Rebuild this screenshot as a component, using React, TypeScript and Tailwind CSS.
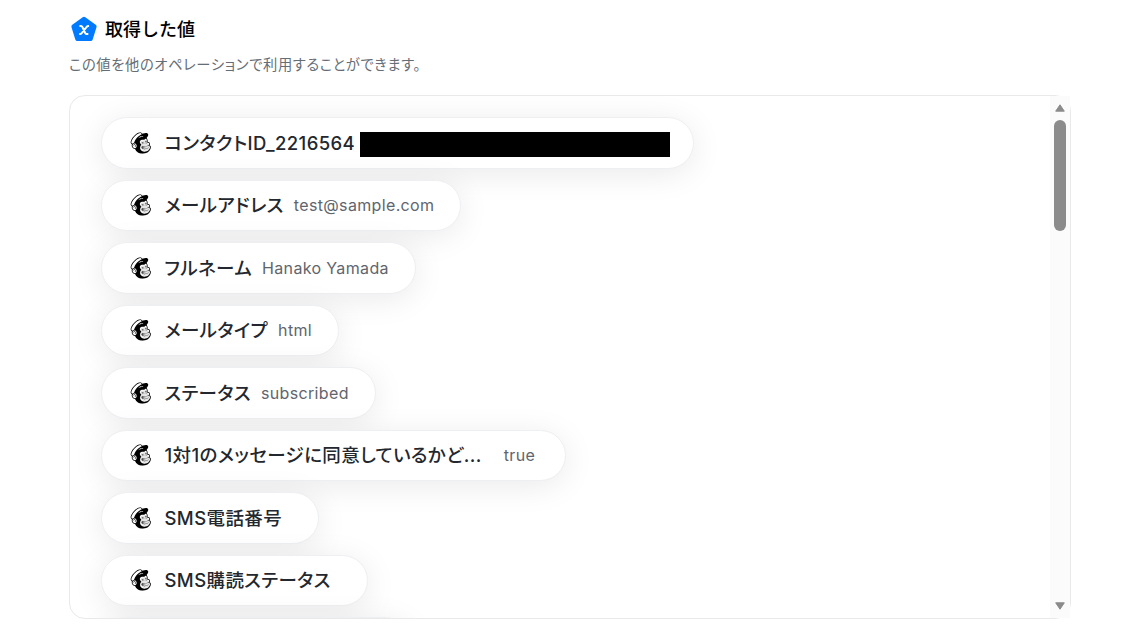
import { SiMailchimp } from "react-icons/si";

type Field = { label: string; value?: string; width: string; gap?: string; redacted?: boolean };

const fields: Field[] = [
  { label: "コンタクトID_2216564", width: "w-[593px]", redacted: true },
  { label: "メールアドレス", value: "test@sample.com", width: "w-[360px]", gap: "ml-[10px]" },
  { label: "フルネーム", value: "Hanako Yamada", width: "w-[315px]", gap: "ml-[10px]" },
  { label: "メールタイプ", value: "html", width: "w-[238.5px]", gap: "ml-[10px]" },
  { label: "ステータス", value: "subscribed", width: "w-[275px]", gap: "ml-[10px]" },
  { label: "1対1のメッセージに同意しているかど...", value: "true", width: "w-[465px]", gap: "ml-[22px]" },
  { label: "SMS電話番号", width: "w-[218.5px]" },
  { label: "SMS購読ステータス", width: "w-[267px]" },
];

const pill =
  "flex h-[51.5px] shrink-0 items-center rounded-full border border-[#eeeff2] bg-white shadow-[0_5px_32px_rgba(0,0,0,0.085)]";

function MailchimpIcon() {
  return (
    <svg className="h-[22px] w-[21.5px] shrink-0" viewBox="0 0 24 24">
      <path d="M12 9.5L19.5 9L20 13L23 15.5L20.5 20L15 21L11.5 17Z" fill="#e2e2e2" />
      <SiMailchimp size={24} color="#000" />
      <path d="M3.3 9.5C4.5 6.3 7.3 3.8 10.3 2.5" fill="none" stroke="#fff" strokeOpacity=".5" strokeWidth="1.2" />
      <path d="M14 12.5L18 12L19 15L21.5 15.5L20 18L15.5 18.5Z" fill="#e8e8e8" fillOpacity=".55" />
    </svg>
  );
}

function FieldPill({ field }: { field: Field }) {
  return (
    <div className={`${pill} ${field.width} pl-[28px]`}>
      <MailchimpIcon />
      <span className="ml-[13.5px] mt-[1.5px] whitespace-nowrap text-[18.5px] font-medium tracking-[0.4px] text-[#23272e] [font-feature-settings:'palt']">
        {field.label}
      </span>
      {field.value && (
        <span className={`${field.gap} whitespace-nowrap text-[16px] tracking-[0.35px] text-[#5f656e]`}>
          {field.value}
        </span>
      )}
      {field.redacted && <div className="ml-[5px] mt-[3px] h-[25.5px] w-[310px] shrink-0 bg-black" />}
    </div>
  );
}

function VariableIcon() {
  return (
    <svg className="h-[26px] w-[28px]" viewBox="0 0 28 26">
      <path
        d="M12.7 1.3Q14 .4 15.3 1.3L25.7 8.8Q27 9.7 26.5 11.2L22.7 23.4Q22.2 25 20.6 25H7.4Q5.8 25 5.3 23.4L1.5 11.2Q1 9.7 2.3 8.8Z"
        fill="#007bff"
      />
      <path
        d="M10.2 10H11q.9 0 1.400 1l2.800 6q.5 1 1.400 1h1M18.300 10q-.9 0-1.600.9l-5 6.200q-.7.9-1.700.9"
        fill="none"
        stroke="#fff"
        strokeWidth="1.9"
        strokeLinecap="round"
        strokeLinejoin="round"
      />
    </svg>
  );
}

export default function App() {
  return (
    <div className="h-[627px] overflow-hidden bg-white pl-[69px] font-['Inter','Noto_Sans_CJK_JP',sans-serif]">
      <header className="flex h-[95px] flex-col pt-[16px]">
        <div className="flex h-[26px] items-center pl-[1px]">
          <VariableIcon />
          <h1 className="ml-[7px] mt-[2px] text-[18px] font-medium leading-[26px] text-black">取得した値</h1>
        </div>
        <p className="mt-[12px] text-[14.3px] leading-[22px] tracking-[0.6px] text-[#656d76] [font-feature-settings:'palt']">
          この値を他のオペレーションで利用することができます。
        </p>
      </header>
      <section className="flex h-[524px] w-[1002px] rounded-[16px] border border-[#e9e9e9]">
        <div className="flex h-full flex-1 flex-col gap-[11px] overflow-hidden rounded-l-[15px] pl-[30.5px] pt-[21.2px]">
          {fields.map((field) => (
            <FieldPill key={field.label} field={field} />
          ))}
          <div className={`${pill} w-[310px]`} />
        </div>
        <div className="flex w-[20px] flex-col items-center bg-[#fbfbfb] pt-[8px] pb-[8px]">
          <svg className="h-[8px] w-[10px]" viewBox="0 0 10 8">
            <path d="M5 .8 9.3 7.2H.7Z" fill="#8b8b8b" stroke="#8b8b8b" strokeLinejoin="round" />
          </svg>
          <div className="mt-[8px] h-[111px] w-[12px] rounded-full bg-[#8b8b8b]" />
          <svg className="mt-auto h-[8px] w-[10px]" viewBox="0 0 10 8">
            <path d="M5 7.2.7.8H9.3Z" fill="#8b8b8b" stroke="#8b8b8b" strokeLinejoin="round" />
          </svg>
        </div>
      </section>
    </div>
  );
}
